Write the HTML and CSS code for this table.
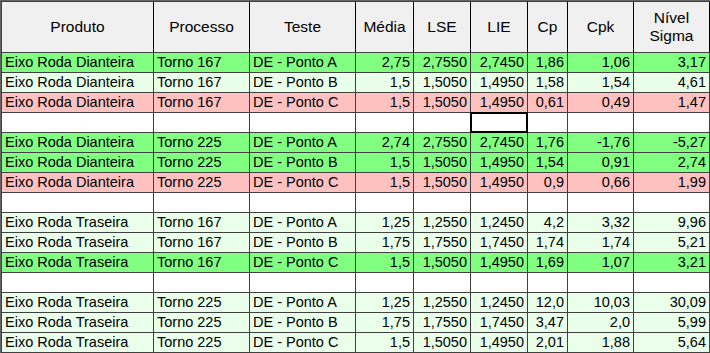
FILE: index.html
```html
<!DOCTYPE html>
<html lang="en">
  <head>
    <meta charset="UTF-8" />
    <title>Processos - Capabilidade</title>
    <link rel="stylesheet" href="styles.css">
  </head>
  <body>
    <!-- Planilha de capabilidade -->
    <div class="sheet">
      <div class="row head">
        <div>Produto</div><div>Processo</div><div>Teste</div><div>Média</div><div>LSE</div><div>LIE</div><div>Cp</div><div>Cpk</div><div>Nível<br>Sigma</div>
      </div>

      <div class="row ok">
        <div>Eixo Roda Dianteira</div><div>Torno 167</div><div>DE - Ponto A</div><div class="n">2,75</div><div class="n">2,7550</div><div class="n">2,7450</div><div class="n">1,86</div><div class="n">1,06</div><div class="n">3,17</div>
      </div>
      <div class="row good">
        <div>Eixo Roda Dianteira</div><div>Torno 167</div><div>DE - Ponto B</div><div class="n">1,5</div><div class="n">1,5050</div><div class="n">1,4950</div><div class="n">1,58</div><div class="n">1,54</div><div class="n">4,61</div>
      </div>
      <div class="row bad">
        <div>Eixo Roda Dianteira</div><div>Torno 167</div><div>DE - Ponto C</div><div class="n">1,5</div><div class="n">1,5050</div><div class="n">1,4950</div><div class="n">0,61</div><div class="n">0,49</div><div class="n">1,47</div>
      </div>
      <div class="row blank">
        <div></div><div></div><div></div><div></div><div></div><div class="selected"></div><div></div><div></div><div></div>
      </div>

      <div class="row ok">
        <div>Eixo Roda Dianteira</div><div>Torno 225</div><div>DE - Ponto A</div><div class="n">2,74</div><div class="n">2,7550</div><div class="n">2,7450</div><div class="n">1,76</div><div class="n">-1,76</div><div class="n">-5,27</div>
      </div>
      <div class="row ok">
        <div>Eixo Roda Dianteira</div><div>Torno 225</div><div>DE - Ponto B</div><div class="n">1,5</div><div class="n">1,5050</div><div class="n">1,4950</div><div class="n">1,54</div><div class="n">0,91</div><div class="n">2,74</div>
      </div>
      <div class="row bad">
        <div>Eixo Roda Dianteira</div><div>Torno 225</div><div>DE - Ponto C</div><div class="n">1,5</div><div class="n">1,5050</div><div class="n">1,4950</div><div class="n">0,9</div><div class="n">0,66</div><div class="n">1,99</div>
      </div>
      <div class="row blank">
        <div></div><div></div><div></div><div></div><div></div><div></div><div></div><div></div><div></div>
      </div>

      <div class="row good">
        <div>Eixo Roda Traseira</div><div>Torno 167</div><div>DE - Ponto A</div><div class="n">1,25</div><div class="n">1,2550</div><div class="n">1,2450</div><div class="n">4,2</div><div class="n">3,32</div><div class="n">9,96</div>
      </div>
      <div class="row good">
        <div>Eixo Roda Traseira</div><div>Torno 167</div><div>DE - Ponto B</div><div class="n">1,75</div><div class="n">1,7550</div><div class="n">1,7450</div><div class="n">1,74</div><div class="n">1,74</div><div class="n">5,21</div>
      </div>
      <div class="row ok">
        <div>Eixo Roda Traseira</div><div>Torno 167</div><div>DE - Ponto C</div><div class="n">1,5</div><div class="n">1,5050</div><div class="n">1,4950</div><div class="n">1,69</div><div class="n">1,07</div><div class="n">3,21</div>
      </div>
      <div class="row blank">
        <div></div><div></div><div></div><div></div><div></div><div></div><div></div><div></div><div></div>
      </div>

      <div class="row good">
        <div>Eixo Roda Traseira</div><div>Torno 225</div><div>DE - Ponto A</div><div class="n">1,25</div><div class="n">1,2550</div><div class="n">1,2450</div><div class="n">12,0</div><div class="n">10,03</div><div class="n">30,09</div>
      </div>
      <div class="row good">
        <div>Eixo Roda Traseira</div><div>Torno 225</div><div>DE - Ponto B</div><div class="n">1,75</div><div class="n">1,7550</div><div class="n">1,7450</div><div class="n">3,47</div><div class="n">2,0</div><div class="n">5,99</div>
      </div>
      <div class="row good">
        <div>Eixo Roda Traseira</div><div>Torno 225</div><div>DE - Ponto C</div><div class="n">1,5</div><div class="n">1,5050</div><div class="n">1,4950</div><div class="n">2,01</div><div class="n">1,88</div><div class="n">5,64</div>
      </div>
    </div>
  </body>
</html>
```

FILE: styles.css
```css
body {
  margin: 0;
  background: #fff;
  font-family: "Liberation Sans", Arial, sans-serif;
  font-size: 14.5px;
  color: #000;
}
.sheet {
  width: 710px;
  height: 353px;
  box-sizing: border-box;
  display: grid;
  grid-template-columns: 151px 95px 105px 57px 56px 56px 39px 65px 75px;
  grid-template-rows: 50px repeat(15, 19px);
  gap: 1px;
  padding: 1px;
  border-top: 1px solid #646464;
  border-left: 1px solid #646464;
  background: #404040;
}
.row {
  display: contents;
}
.row > div {
  padding: 0 3px;
  white-space: nowrap;
  overflow: hidden;
  line-height: 19px;
  background: #fff;
}
.head > div {
  background: #f0f0f0;
  font-size: 15.5px;
  line-height: 18px;
  text-align: center;
  display: flex;
  align-items: center;
  justify-content: center;
  box-shadow: 1px 0 0 #000;
}
.ok > div {
  background: #80ff80;
}
.good > div {
  background: #eaffea;
}
.bad > div {
  background: #ffc0c0;
}
.row > .n {
  text-align: right;
}
.row > .selected {
  outline: 2px solid #000;
  outline-offset: -1px;
}
```
